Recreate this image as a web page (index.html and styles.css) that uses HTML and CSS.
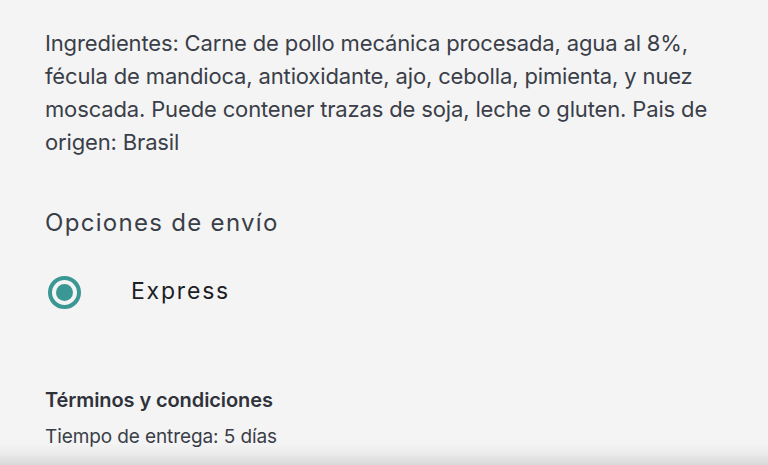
FILE: index.html
```html
<!DOCTYPE html>
<html lang="es">
<head>
<meta charset="utf-8">
<link rel="stylesheet" href="styles.css">
</head>
<body>
<main class="page">
  <p class="ingredients">Ingredientes: Carne de pollo mecánica procesada, agua al 8%, fécula de mandioca, antioxidante, ajo, cebolla, pimienta, y nuez moscada. Puede contener trazas de soja, leche o gluten. Pais de origen: Brasil</p>
  <h2 class="section-title">Opciones de envío</h2>
  <label class="option">
    <span class="radio"><span class="radio-dot"></span></span>
    <span class="option-label">Express</span>
  </label>
  <h3 class="terms-title">Términos y condiciones</h3>
  <p class="terms-text">Tiempo de entrega: 5 días</p>
</main>
<div class="bottom-shadow"></div>
</body>
</html>
```
FILE: styles.css
```css
html, body {
  margin: 0;
  padding: 0;
  background: #f4f4f4;
  height: 100%;
  overflow: hidden;
}
body {
  font-family: Inter, "Noto Sans", sans-serif;
  color: #3a3e48;
}
.page {
  padding: 27px 40px 0 45px;
  display: flex;
  flex-direction: column;
}
.ingredients {
  margin: 0;
  font-size: 22px;
  line-height: 33px;
  letter-spacing: -0.15px;
  width: 680px;
}
.section-title {
  margin: 49px 0 0;
  font-weight: 400;
  font-size: 24px;
  line-height: 30px;
  letter-spacing: 1.3px;
  color: #3a3e48;
}
.option {
  margin-top: 38px;
  display: flex;
  align-items: center;
}
.radio {
  width: 25px;
  height: 25px;
  border: 4px solid #3a9793;
  border-radius: 50%;
  display: flex;
  align-items: center;
  justify-content: center;
  margin-left: 3px;
}
.radio-dot {
  width: 17px;
  height: 17px;
  border-radius: 50%;
  background: #3a9793;
}
.option-label {
  margin-left: 50px;
  padding-bottom: 3px;
  font-size: 23px;
  letter-spacing: 1.8px;
  color: #1b1e25;
}
.terms-title {
  margin: 77px 0 0;
  font-size: 20px;
  font-weight: 600;
  line-height: 28px;
  letter-spacing: -0.1px;
  color: #2f323a;
}
.terms-text {
  margin: 10px 0 0;
  font-size: 19px;
  line-height: 26px;
  letter-spacing: -0.1px;
  color: #3a3e48;
}
.bottom-shadow {
  position: fixed;
  left: 0;
  right: 0;
  bottom: 0;
  height: 22px;
  background: linear-gradient(to bottom, rgba(0,0,0,0), rgba(0,0,0,0.03) 45%, rgba(0,0,0,0.11));
}
```
